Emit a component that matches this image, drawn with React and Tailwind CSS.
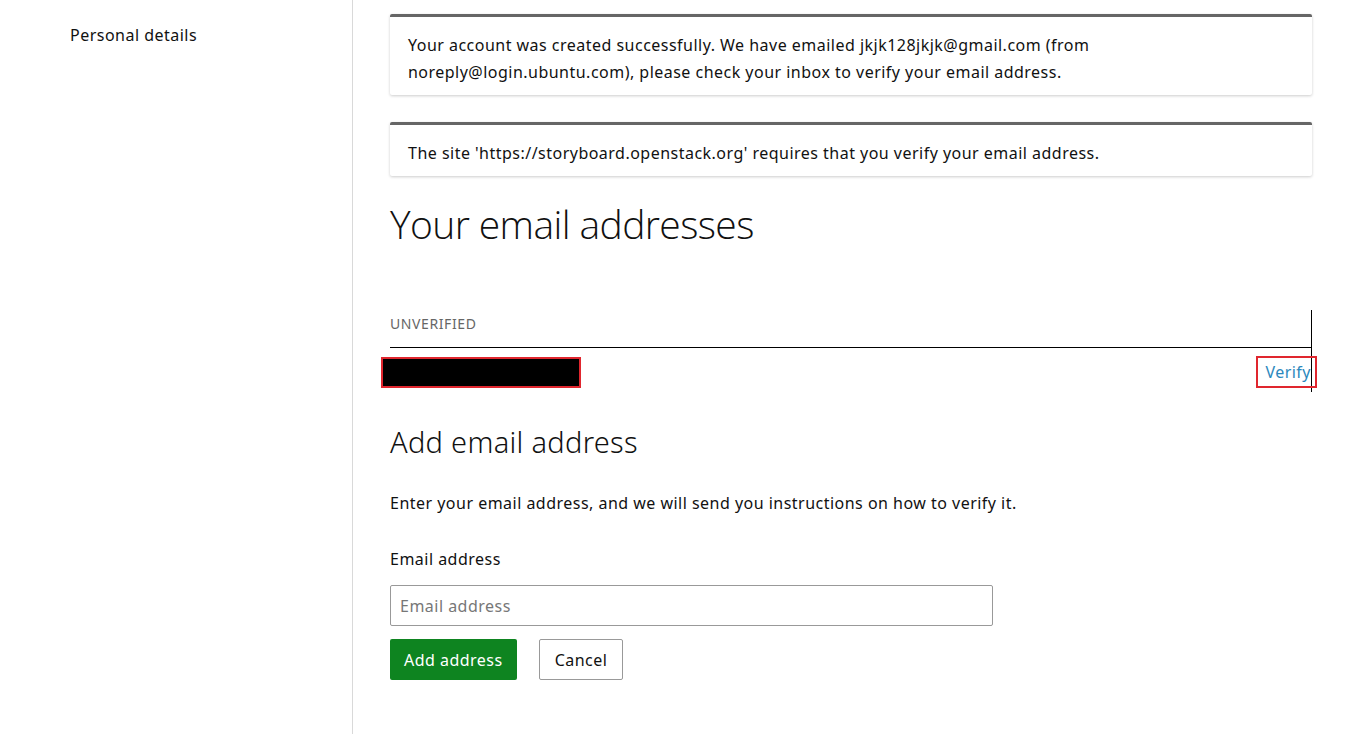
export default function App() {
  return (
    <div className="flex min-h-[734px] bg-white text-[#111] font-['Noto_Sans',sans-serif] text-base tracking-[0.48px]">
      <aside className="w-[353px] shrink-0 border-r border-[#d9d9d9] pl-[70px] pt-[22px]">
        <a className="text-[#111] leading-[26px]">Personal details</a>
      </aside>

      <main className="w-[922px] ml-[37px] pt-[14px]">
        <div className="rounded-[2px] border-t-[3px] border-[#666] bg-white px-[18px] pt-[15px] pb-[9px] shadow-[0_1px_3px_rgba(0,0,0,0.2)] leading-[27px]">
          Your account was created successfully. We have emailed jkjk128jkjk@gmail.com (from
          <br />
          noreply@login.ubuntu.com), please check your inbox to verify your email address.
        </div>

        <div className="mt-[27px] rounded-[2px] border-t-[3px] border-[#666] bg-white px-[18px] pt-[15px] pb-[9px] shadow-[0_1px_3px_rgba(0,0,0,0.2)] leading-[27px]">
          The site 'https://storyboard.openstack.org' requires that you verify your email address.
        </div>

        <h1 className="mt-[20px] font-['Open_Sans',sans-serif] text-[39px] font-extralight leading-[56px] tracking-[-0.6px]">Your email addresses</h1>

        <div className="mt-[58px] w-[922px] border-r border-black">
          <div className="border-b border-black pt-[4px] pb-[13px] text-[14px] uppercase text-[#666] leading-[20px] tracking-[0.6px]">Unverified</div>
          <div className="flex items-start justify-between h-[44px]">
            <div className="-ml-[9px] mt-[9px] h-[31px] w-[200px] border-2 border-[#e0262e] bg-black" />
            <div className="-mr-[6px] mt-[8px] border-2 border-[#e0262e] pl-[7px] pr-[4px] leading-[28px] text-[#2b88bd]">Verify</div>
          </div>
        </div>

        <h2 className="mt-[30px] text-[29px] font-light leading-[40px] tracking-[0.3px]">Add email address</h2>

        <p className="mt-[28px] leading-[26px]">Enter your email address, and we will send you instructions on how to verify it.</p>

        <label className="mt-[30px] block leading-[26px]">Email address</label>

        <input
          type="text"
          placeholder="Email address"
          className="mt-[13px] block h-[41px] w-[603px] rounded-[2px] border border-[#999] px-[9px] text-base tracking-[0.48px] placeholder:text-[#777]"
        />

        <div className="mt-[13px] flex gap-[22px]">
          <button className="h-[41px] rounded-[2px] bg-[#0e8420] px-[14px] text-white tracking-[0.48px]">Add address</button>
          <button className="h-[41px] rounded-[2px] border border-[#999] px-[15px] text-[#111] tracking-[0.48px]">Cancel</button>
        </div>
      </main>
    </div>
  );
}
